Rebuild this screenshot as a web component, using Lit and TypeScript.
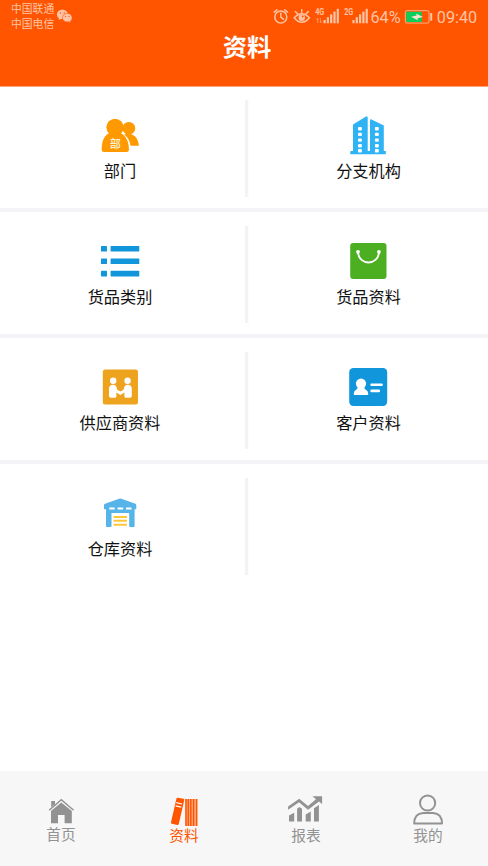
import { LitElement, html, svg, css } from "lit";
import { customElement } from "lit/decorators.js";
import { classMap } from "lit/directives/class-map.js";

const windows = [127, 132.7, 138.4, 144.1, 149];

const icons = {
  department: html`<svg class="tile-icon" viewBox="98 113 44 44">
    <g fill="#ff9900">
      <ellipse cx="128.8" cy="128.2" rx="6.4" ry="6.3" />
      <path d="M124 134.5C132 131.5 138.5 137 138.9 145.7H130.5C129.8 140.5 128 137.5 124 134.5Z" />
    </g>
    <g fill="#ff9900" stroke="#fff" stroke-width="1.2" paint-order="stroke">
      <path d="M108.5 133.5C103.5 136.5 101.5 142.5 101.7 150Q101.8 152 103.8 152H126.8Q128.8 152 128.9 150C129 142.5 126.5 136.5 121.5 133.5Z" />
    </g>
    <ellipse cx="115" cy="127.3" rx="8.6" ry="8.6" fill="#ff9900" />
    <text x="115.2" y="147.8" text-anchor="middle" class="badge-text">部</text>
  </svg>`,
  branch: html`<svg class="tile-icon" viewBox="346 113 44 44">
    <g fill="#2fb3f5">
      <path d="M353 124.5L366 116.4Q367.7 116 367.7 117.8V151.5H353Z" />
      <path d="M370 120.4Q370 118.8 371.5 119.6L383.8 125.5V151.5H370Z" />
      <path d="M350.8 151H385.8V154.2H350.3V151.7Z" />
    </g>
    <g fill="#fff">
      ${windows.map(y => svg`<rect x="358" y=${y} width="3.9" height="3.4" rx="1" /><rect x="374.9" y=${y} width="3.9" height="3.4" rx="1" />`)}
    </g>
  </svg>`,
  category: html`<svg class="tile-icon" viewBox="98 239 44 44">
    <g fill="#1296db">
      ${[246, 258.4, 270.8].map(y => svg`<rect x="101" y=${y} width="6" height="5.6" rx=".6" /><rect x="110.6" y=${y} width="28.7" height="5.6" rx=".6" />`)}
    </g>
  </svg>`,
  goods: html`<svg class="tile-icon" viewBox="346 239 44 44">
    <rect x="350.2" y="243" width="36.3" height="36" rx="3" fill="#4caf22" />
    <path d="M358 252.3C359 265.8 378 265.8 379 252.3" fill="none" stroke="#fff" stroke-width="1.9" />
    <circle cx="358" cy="251.8" r="1.9" fill="#fff" /><circle cx="378.9" cy="251.8" r="1.9" fill="#fff" />
  </svg>`,
  supplier: html`<svg class="tile-icon" viewBox="98 365 44 44">
    <rect x="102.8" y="369.4" width="35.2" height="35" rx="2.5" fill="#eea31f" />
    <g fill="#fff">
      <circle cx="113.2" cy="380.8" r="3.2" /><circle cx="127.6" cy="380.8" r="3.2" />
      <path d="M109 388.5Q109.2 384.7 113 384.7Q116.7 384.7 117.2 389.7L120.4 391.5L123.6 389.7Q124.1 384.7 127.8 384.7Q131.6 384.7 131.8 388.5V396Q131.8 397.8 130 397.8H126Q124.4 397.8 124.4 396.3V392.5L120.4 394.9L116.4 392.5V396.3Q116.4 397.8 114.8 397.8H110.8Q109 397.8 109 396Z" />
    </g>
  </svg>`,
  customer: html`<svg class="tile-icon" viewBox="346 365 44 44">
    <rect x="349.2" y="368" width="38" height="38" rx="4.2" fill="#1296db" />
    <g fill="#fff">
      <ellipse cx="361" cy="383.6" rx="5.1" ry="5.2" />
      <path d="M358 386.5L364 386.5Q364.3 389 366 389.8Q368.3 391 368.3 394Q368.3 395.1 367.2 395.1H354.8Q353.7 395.1 353.7 394Q353.7 391 356 389.8Q357.7 389 358 386.5Z" />
      <rect x="370.4" y="383.4" width="12.4" height="2.7" rx="1" /><rect x="370.4" y="389.6" width="9.6" height="2.7" rx="1" />
    </g>
  </svg>`,
  warehouse: html`<svg class="tile-icon" viewBox="98 491 44 44">
    <path fill="#56b4e9" d="M104 505.2Q104 504.2 105 503.8L119.2 498.8Q120.3 498.3 121.4 498.8L135.4 503.8Q136.3 504.2 136.3 505.2V509.3H134.6V526.2Q134.6 527 133.8 527H130Q129.2 527 129.2 526.2V513H111.5V526.2Q111.5 527 110.7 527H106.8Q106 527 106 526.2V509.3H104Z" />
    <path d="M109.3 508.6H114.7M117.6 508.6H123.2M126 508.6H131.5" stroke="#fff" stroke-width="2" />
    <path d="M113.5 516.9H127M113.5 520.8H127M113.5 524.7H127" stroke="#ffc839" stroke-width="2" />
  </svg>`,
  home: html`<svg class="nav-icon" viewBox="43 792 36 36">
    <g fill="#929292">
      <path d="M51.2 801H55V804.2L51.2 807.2Z" />
      <path d="M61.3 802.4L71.8 811V823.2H64.6V815H58V823.2H51V811Z" />
    </g>
    <path d="M49.2 810.2L61.3 799.7L73.6 810.2" fill="none" stroke="#929292" stroke-width="1.5" />
  </svg>`,
  books: html`<svg class="nav-icon" viewBox="166 792 36 36">
    <path d="M178 797.7L183.4 798.8Q184.5 799.1 184.2 800.2L178.8 824Q178.5 825.2 177.3 825L171.8 823.7Q170.7 823.4 171 822.3L176.4 798.7Q176.8 797.5 178 797.7Z" fill="#ff5500" />
    <path d="M176.3 802.7L182 804M175.6 805.8L181.3 807.1" stroke="#fff" stroke-width="1.2" />
    <rect x="185.3" y="799" width="12" height="27" fill="#ffb08c" />
    <path d="M186 799V826M188.3 799V826M190.8 799V826M193.6 799V826M196.6 799V826" stroke="#ff5500" stroke-width="1.5" />
  </svg>`,
  chart: html`<svg class="nav-icon" viewBox="288 792 36 36">
    <g fill="#929292">
      <path d="M289 815.6L294.2 812.8V821.4H289ZM297.1 808.8L299.4 807L302 808.8V821.4H297.1ZM305.7 814.4L310.8 811.4V821.4H305.7ZM314 808.3L318.9 805V821.4H314Z" />
      <path d="M312.4 796.2H322.1V803.9L319 801.4L308 809.7L299 802.3L288.1 809.8V806.5L299.2 798.8L308 806L316 799.2Z" />
    </g>
  </svg>`,
  person: html`<svg class="nav-icon" viewBox="410 792 36 36">
    <g fill="none" stroke="#929292" stroke-width="2">
      <circle cx="427.6" cy="803" r="7.6" />
      <path d="M414.2 823.5Q414.2 813.5 423.2 813H433Q442 813.5 442 823.5Z" stroke-linejoin="round" />
    </g>
  </svg>`,
};

type Icon = keyof typeof icons;

const rows: { icon: Icon; label: string }[][] = [
  [{ icon: "department", label: "部门" }, { icon: "branch", label: "分支机构" }],
  [{ icon: "category", label: "货品类别" }, { icon: "goods", label: "货品资料" }],
  [{ icon: "supplier", label: "供应商资料" }, { icon: "customer", label: "客户资料" }],
  [{ icon: "warehouse", label: "仓库资料" }],
];

const tabs: { icon: Icon; label: string }[] = [
  { icon: "home", label: "首页" },
  { icon: "books", label: "资料" },
  { icon: "chart", label: "报表" },
  { icon: "person", label: "我的" },
];

@customElement("status-bar")
class StatusBar extends LitElement {
  static styles = css`
    :host { display: flex; height: 33px; color: #ffc4a6; font-family: Roboto, "Noto Sans CJK SC", sans-serif; }
    .carriers { width: 44px; padding: 2px 0 0 11px; font-size: 10.8px; line-height: 15px; white-space: nowrap; }
    .wechat { width: 17px; height: 16px; margin: 8px 0 0 1px; }
    .signals { width: 98px; height: 20px; margin: 7px 0 0 199px; }
    .net { font: 700 8.5px "Roboto", sans-serif; fill: #ffc4a6; }
    .percent, .time { font-size: 16.2px; line-height: 20px; margin-top: 8px; white-space: nowrap; }
    .percent { width: 33px; margin-left: 0.5px; }
    .battery { width: 29px; height: 16px; margin-top: 9px; }
    .time { margin-left: 4.3px; }
  `;
  bars(x: number) {
    return [0, 1, 2, 3, 4].map(i => svg`<rect x=${x + i * 3.3} y=${20 - i * 2.8} width="2.2" height=${3.3 + i * 2.8} />`);
  }
  render() {
    return html`
      <div class="carriers"><div>中国联通</div><div>中国电信</div></div>
      <svg class="wechat" viewBox="56 8 17 16">
        <path d="M62.3 9.8C58.8 9.8 56.9 12.2 56.9 14.5Q56.9 16.8 59 18.2L58.5 20L60.7 18.9L62.3 19.1C66 19.1 67.9 16.8 67.9 14.5S66 9.8 62.3 9.8Z" fill="#ffc4a6" />
        <path d="M67.4 13.4C64.2 13.4 62.4 15.5 62.4 17.7C62.4 20 64.4 22 67.4 22L68.8 21.8L70.8 22.9L70.4 21.2Q72.1 20 72.1 17.7C72.1 15.5 70.4 13.4 67.4 13.4Z" fill="#ffc4a6" stroke="#ff5500" stroke-width=".6" />
        <g fill="#ff5500"><circle cx="60.4" cy="13" r=".7" /><circle cx="64.2" cy="13" r=".7" /><circle cx="65.7" cy="16.4" r=".6" /><circle cx="69.1" cy="16.4" r=".6" /></g>
      </svg>
      <svg class="signals" viewBox="272 7 98 20">
        <g fill="none" stroke="#ffc4a6" stroke-width="1.5" stroke-linecap="round">
          <circle cx="280.8" cy="17" r="6" />
          <path d="M280.8 13.2V17.2L283.4 19.2M274.2 12.2L277 9.9M284.7 9.9L287.5 12.2" />
          <path d="M294.2 17.7Q301.8 9.6 309.4 17.7Q301.8 27 294.2 17.7Z" />
          <path d="M295.3 11.5L297.7 14M301.8 9.8V12.3M308.3 11.5L305.9 14" />
        </g>
        <circle cx="301.8" cy="17.7" r="3.2" fill="#ffc4a6" />
        <circle cx="302.7" cy="16.5" r=".9" fill="#ff5500" />
        <text class="net" x="315.2" y="15" textLength="9" lengthAdjust="spacingAndGlyphs">4G</text>
        <text class="net" x="344.2" y="15" textLength="9" lengthAdjust="spacingAndGlyphs">2G</text>
        <path d="M317.8 18.2V23M316.4 19.7L317.8 18.2M320.4 18.2V23M321.8 21.5L320.4 23" fill="none" stroke="#ff9864" stroke-width="1" />
        <g fill="#ffc4a6">${this.bars(323.5)}${this.bars(352.4)}</g>
      </svg>
      <div class="percent">64%</div>
      <svg class="battery" viewBox="404 9 29 16">
        <rect x="405.4" y="10.7" width="23.6" height="12.5" rx="1.8" fill="none" stroke="#ff9c69" stroke-width="1.3" />
        <rect x="406.3" y="11.8" width="15.5" height="10.2" fill="#0cce5c" />
        <path d="M411 16.7L416.8 15.5L416 13.4L423 17L417.4 18.2L418 20.3Z" fill="#ffe3d0" />
        <rect x="430.2" y="13" width="2" height="7.8" rx=".6" fill="#ffc4a6" />
      </svg>
      <div class="time">09:40</div>
    `;
  }
}

@customElement("app-root")
class AppRoot extends LitElement {
  static styles = css`
    :host { display: flex; flex-direction: column; height: 866px; background: #fff; color: #111; font-family: "Noto Sans CJK SC", sans-serif; overflow: hidden; }
    header { height: 86px; flex: none; background: #ff5500; box-shadow: 0 1px #ffa477; }
    .title { margin: -2px 0 0; text-align: center; color: #fff; font-size: 24.3px; line-height: 30px; font-weight: 700; padding-left: 6px; }
    main { flex: 1; }
    .row { display: flex; height: 122px; border-bottom: 4px solid #f3f3f8; }
    .row:last-child { border-bottom: 0; }
    .tile { width: 240px; display: flex; flex-direction: column; align-items: center; padding-top: 27px; }
    .divider { width: 3px; height: 97px; margin: 14px 0 0 5px; background: #f3f3f5; border-right: 1px solid #fbfbfc; }
    .divider + .tile { width: 239px; }
    .tile-icon { width: 44px; height: 44px; }
    .divider + .tile .tile-icon { margin-left: -1px; }
    .badge-text { font: 500 11px "Noto Sans CJK SC", sans-serif; fill: #fff3dc; }
    .tile-label { font-size: 16.2px; line-height: 24px; margin-top: 1px; }
    nav { display: flex; flex: none; height: 95px; background: #f7f7f7; }
    .tab { width: 122px; box-sizing: border-box; display: flex; flex-direction: column; align-items: center; padding-top: 21px; color: #929292; font-size: 14.7px; }
    .tab + .tab { padding-left: 2px; }
    .nav-icon { width: 36px; height: 36px; }
    .tab-label { line-height: 20px; margin-top: -3px; }
    .tab:first-child .tab-label { margin-top: -4px; }
    .active { color: #ff5500; }
  `;
  tile(icon: Icon, label: string) {
    return html`<div class="tile">${icons[icon]}<div class="tile-label">${label}</div></div>`;
  }
  render() {
    return html`
      <header><status-bar></status-bar><h1 class="title">资料</h1></header>
      <main>
        ${rows.map(([left, right]) => html`<section class="row">
          ${this.tile(left.icon, left.label)}
          <div class="divider"></div>
          ${right ? this.tile(right.icon, right.label) : null}
        </section>`)}
      </main>
      <nav>
        ${tabs.map((t, i) => html`<div class=${classMap({ tab: true, active: i === 1 })}>
          ${icons[t.icon]}<div class="tab-label">${t.label}</div>
        </div>`)}
      </nav>
    `;
  }
}
